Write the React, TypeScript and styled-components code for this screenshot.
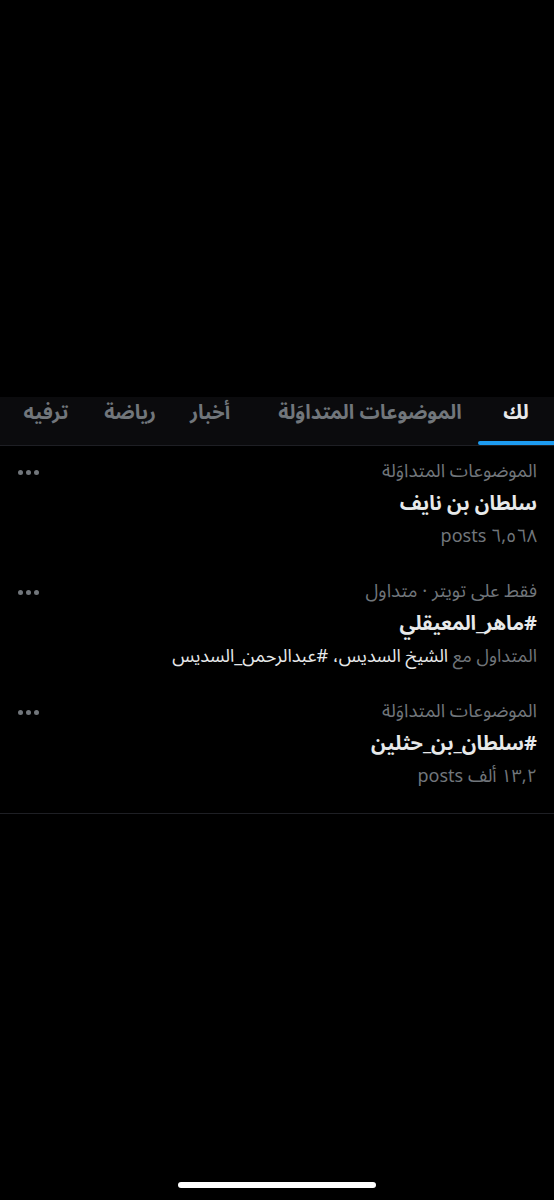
import React from 'react';
import styled, { createGlobalStyle } from 'styled-components';

const GlobalStyle = createGlobalStyle`
  html, body {
    margin: 0;
    padding: 0;
    background: #000;
  }
  body {
    font-family: "Noto Sans Arabic", "DejaVu Sans", "Noto Sans", sans-serif;
    -webkit-font-smoothing: antialiased;
  }
`;

const Screen = styled.div`
  width: 554px;
  height: 1200px;
  background: #000;
  display: flex;
  flex-direction: column;
  overflow: hidden;
`;

const TopSpace = styled.div`
  height: 397px;
  flex-shrink: 0;
`;

const TabBar = styled.nav`
  direction: rtl;
  height: 48px;
  background: #0b0b0d;
  border-bottom: 1px solid #1e1f24;
  display: flex;
  align-items: stretch;
  flex-shrink: 0;
`;

const Tab = styled.div<{ active?: boolean; width: number }>`
  position: relative;
  width: ${p => p.width}px;
  flex-shrink: 0;
  display: flex;
  justify-content: center;
  padding-top: 3px;
  font-size: 20px;
  font-weight: 700;
  line-height: 26px;
  color: ${p => (p.active ? '#e7e9ea' : '#71767b')};
  white-space: nowrap;

  &::after {
    content: '';
    display: ${p => (p.active ? 'block' : 'none')};
    position: absolute;
    left: 0;
    right: 0;
    bottom: 0;
    height: 4px;
    border-radius: 2px 0 0 2px;
    background: #1d9bf0;
  }
`;

const List = styled.div`
  direction: rtl;
  border-bottom: 1px solid #1e1f24;
  padding-bottom: 7px;
`;

const Row = styled.div`
  display: flex;
  align-items: flex-start;
  justify-content: space-between;
  padding: 10px 17px 14px 18px;
`;

const Body = styled.div`
  display: flex;
  flex-direction: column;
`;

const Meta = styled.div`
  font-size: 18.5px;
  line-height: 32px;
  color: #71767b;
`;

const Title = styled.div`
  font-size: 20px;
  font-weight: 700;
  line-height: 32px;
  color: #e7e9ea;
`;

const Count = styled.div`
  font-size: 18px;
  line-height: 32px;
  color: #71767b;
`;

const Highlight = styled.span`
  color: #e7e9ea;
`;

const More = styled.div`
  display: flex;
  gap: 3px;
  padding-top: 14px;
`;

const Dot = styled.span`
  width: 5px;
  height: 5px;
  border-radius: 50%;
  background: #71767b;
`;

const HomeBar = styled.div`
  margin-top: auto;
  margin-bottom: 12px;
  align-self: center;
  width: 198px;
  height: 6px;
  border-radius: 3px;
  background: #fff;
`;

const tabs = [
  { label: 'لك', width: 76, active: true },
  { label: 'الموضوعات المتداوَلة', width: 216 },
  { label: 'أخبار', width: 104 },
  { label: 'رياضة', width: 56 },
  { label: 'ترفيه', width: 112 },
];

const trends = [
  {
    meta: 'الموضوعات المتداوَلة',
    title: 'سلطان بن نايف',
    count: '٦,٥٦٨ posts',
  },
  {
    meta: 'فقط على تويتر · متداول',
    title: '#ماهر_المعيقلي',
    with: 'الشيخ السديس، #عبدالرحمن_السديس',
  },
  {
    meta: 'الموضوعات المتداوَلة',
    title: '#سلطان_بن_حثلين',
    count: '١٣,٢ ألف posts',
  },
];

export default function App() {
  return (
    <>
      <GlobalStyle />
      <Screen>
        <TopSpace />
        <TabBar>
          {tabs.map(t => (
            <Tab key={t.label} active={t.active} width={t.width}>
              {t.label}
            </Tab>
          ))}
        </TabBar>
        <List>
          {trends.map((t, i) => (
            <Row key={i}>
              <Body>
                <Meta>{t.meta}</Meta>
                <Title>{t.title}</Title>
                {t.count && <Count>{t.count}</Count>}
                {t.with && (
                  <Count>
                    المتداول مع <Highlight>{t.with}</Highlight>
                  </Count>
                )}
              </Body>
              <More>
                <Dot />
                <Dot />
                <Dot />
              </More>
            </Row>
          ))}
        </List>
        <HomeBar />
      </Screen>
    </>
  );
}
